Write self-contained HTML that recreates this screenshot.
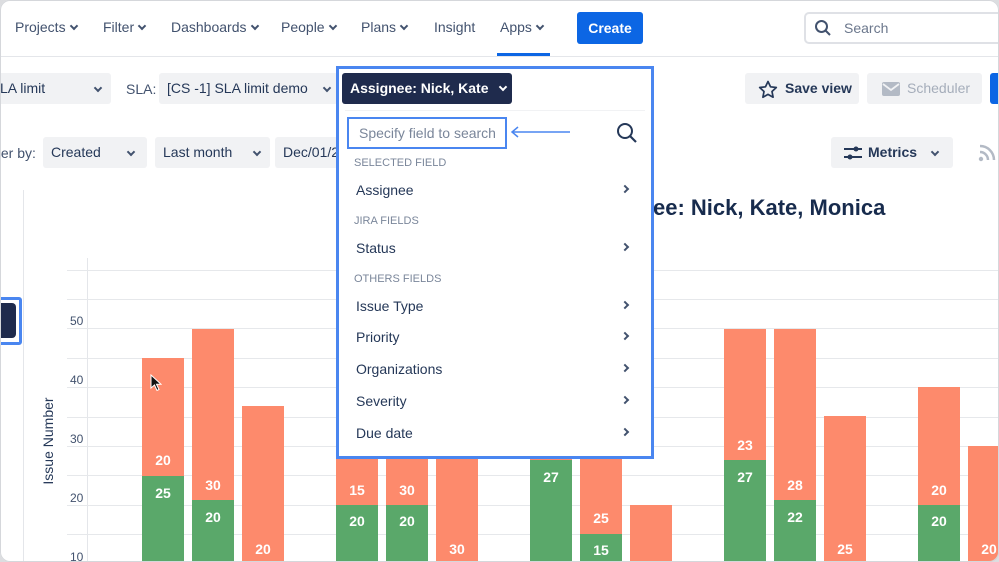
<!DOCTYPE html>
<html><head><meta charset="utf-8"><style>
*{margin:0;padding:0;box-sizing:border-box}
body{width:999px;height:562px;overflow:hidden;background:#dcdde0;font-family:"Liberation Sans",Arial,sans-serif;color:#253858}
#w{position:absolute;left:0;top:0;width:999px;height:562px;background:#fff;border-radius:10px;overflow:hidden}
#fr{position:absolute;left:0;top:0;width:999px;height:562px;border-radius:10px;border:1px solid #d5d7db;pointer-events:none}
.a{position:absolute}
.nav{font-size:14px;color:#42526e;top:19px}
.chev{display:inline-block;width:6px;height:6px;border-right:2px solid #42526e;border-bottom:2px solid #42526e;transform:rotate(45deg);margin-left:5px;position:relative;top:-3px}
.box{background:#f1f2f4;border-radius:3px;font-size:14px;color:#253858;line-height:31px;padding-left:8px}
.gl{position:absolute;left:67px;right:0;height:1px;background:#e6e8eb}
.bar{position:absolute;width:42px}
.o{background:#fd8a6c}.g{background:#5aa86a}
.lb{position:absolute;width:42px;text-align:center;color:#fff;font-size:14px;font-weight:bold}
.it{position:absolute;left:356px;font-size:14px;color:#253858}
.hd{position:absolute;left:354px;font-size:11px;color:#7a869a}
.rc{position:absolute;left:622px;width:6px;height:6px;border-right:2px solid #42526e;border-top:2px solid #42526e;transform:rotate(45deg)}
</style></head><body><div id="w">
<div class="a nav" style="left:15px">Projects<span class="chev"></span></div>
<div class="a nav" style="left:103px">Filter<span class="chev"></span></div>
<div class="a nav" style="left:171px">Dashboards<span class="chev"></span></div>
<div class="a nav" style="left:281px">People<span class="chev"></span></div>
<div class="a nav" style="left:361px">Plans<span class="chev"></span></div>
<div class="a nav" style="left:434px">Insight</div>
<div class="a nav" style="left:500px">Apps<span class="chev"></span></div>
<div class="a" style="left:497px;top:53px;width:53px;height:3px;background:#0c66e4"></div>
<div class="a" style="left:577px;top:12px;width:66px;height:32px;background:#0c66e4;border-radius:3px;color:#fff;font-size:14px;font-weight:bold;text-align:center;line-height:32px">Create</div>
<div class="a" style="left:804px;top:12px;width:200px;height:32px;border:2px solid #dfe1e6;border-radius:5px;font-size:14px;color:#6b778c;line-height:28px;padding-left:38px">Search</div>
<svg class="a" style="left:814px;top:19px" width="18" height="18" viewBox="0 0 18 18"><circle cx="7.5" cy="7.5" r="5.5" fill="none" stroke="#42526e" stroke-width="2"/><line x1="11.5" y1="11.5" x2="16" y2="16" stroke="#42526e" stroke-width="2"/></svg>
<div class="a" style="left:0;top:56px;width:999px;height:1px;background:#e4e6ea"></div>
<div class="a box" style="left:-8px;top:73px;width:119px">LA limit<span class="chev" style="position:absolute;left:98px;top:12px"></span></div>
<div class="a" style="left:126px;top:81px;font-size:14px;color:#42526e">SLA:</div>
<div class="a box" style="left:159px;top:73px;width:179px">[CS -1] SLA limit demo<span class="chev" style="position:absolute;left:160px;top:12px"></span></div>
<div class="a box" style="left:745px;top:73px;width:114px;font-weight:bold;padding-left:40px">Save view</div>
<svg class="a" style="left:758px;top:80px" width="20" height="19" viewBox="0 0 20 19"><path d="M10 1.5l2.5 5.3 5.8.7-4.3 4 1.1 5.7L10 14.4l-5.1 2.8 1.1-5.7-4.3-4 5.8-.7z" fill="none" stroke="#253858" stroke-width="1.7" stroke-linejoin="round"/></svg>
<div class="a box" style="left:867px;top:73px;width:115px;color:#a5adba;padding-left:40px">Scheduler</div>
<svg class="a" style="left:882px;top:82px" width="18" height="14" viewBox="0 0 18 14"><rect x="0" y="0" width="18" height="14" rx="2" fill="#b3bac5"/><path d="M1 2l8 6 8-6" fill="none" stroke="#f1f2f4" stroke-width="1.8"/></svg>
<div class="a" style="left:990px;top:73px;width:20px;height:31px;background:#0c66e4;border-radius:3px"></div>
<div class="a" style="left:-3px;top:145px;font-size:14px;color:#42526e">ter by:</div>
<div class="a box" style="left:43px;top:137px;width:104px">Created<span class="chev" style="position:absolute;left:80px;top:12px"></span></div>
<div class="a box" style="left:155px;top:137px;width:115px">Last month<span class="chev" style="position:absolute;left:94px;top:12px"></span></div>
<div class="a box" style="left:275px;top:137px;width:70px">Dec/01/2</div>
<div class="a box" style="left:831px;top:137px;width:122px;font-weight:bold;padding-left:37px">Metrics<span class="chev" style="position:absolute;left:96px;top:12px"></span></div>
<svg class="a" style="left:843px;top:145px" width="20" height="16" viewBox="0 0 20 16"><g stroke="#253858" stroke-width="2"><line x1="1" y1="4" x2="19" y2="4"/><line x1="1" y1="12" x2="19" y2="12"/></g><circle cx="13" cy="4" r="2.5" fill="#253858"/><circle cx="7" cy="12" r="2.5" fill="#253858"/></svg>
<div class="a box" style="left:963px;top:137px;width:50px"></div>
<svg class="a" style="left:978px;top:144px" width="18" height="18" viewBox="0 0 18 18"><circle cx="3" cy="15" r="2.2" fill="#b3bac5"/><path d="M2 8a8 8 0 0 1 8 8M2 2a14 14 0 0 1 14 14" fill="none" stroke="#b3bac5" stroke-width="2.5"/></svg>
<div class="a" style="left:23px;top:190px;width:1px;height:380px;background:#e4e6ea"></div>
<div class="a" style="left:87px;top:258px;width:1px;height:310px;background:#e4e6ea"></div>
<div class="gl" style="top:270px"></div><div class="gl" style="top:299px"></div><div class="gl" style="top:328px"></div><div class="gl" style="top:358px"></div><div class="gl" style="top:387px"></div><div class="gl" style="top:417px"></div><div class="gl" style="top:446px"></div><div class="gl" style="top:475px"></div><div class="gl" style="top:505px"></div><div class="gl" style="top:534px"></div>
<div class="a" style="left:70px;top:314px;font-size:12px;color:#42526e">50</div>
<div class="a" style="left:70px;top:373px;font-size:12px;color:#42526e">40</div>
<div class="a" style="left:70px;top:432px;font-size:12px;color:#42526e">30</div>
<div class="a" style="left:70px;top:491px;font-size:12px;color:#42526e">20</div>
<div class="a" style="left:70px;top:550px;font-size:12px;color:#42526e">10</div>
<div class="a" style="left:-2px;top:433px;width:100px;transform:rotate(-90deg);font-size:14px;color:#253858;text-align:center">Issue Number</div>
<div class="a" style="left:653px;top:195px;font-size:22px;font-weight:bold;color:#172b4d">ee: Nick, Kate, Monica</div>
<div class="a" style="left:-5px;top:297px;width:27px;height:48px;border:3px solid #4a86f0;border-radius:3px"></div>
<div class="a" style="left:-5px;top:303px;width:21px;height:35px;background:#1f2b4d;border-radius:4px"></div>

<div class="bar o" style="left:142px;top:358px;height:210px"></div><div class="bar g" style="left:142px;top:476px;height:90px"></div>
<div class="lb" style="left:142px;top:452px">20</div><div class="lb" style="left:142px;top:485px">25</div>
<div class="bar o" style="left:192px;top:329px;height:240px"></div><div class="bar g" style="left:192px;top:500px;height:70px"></div>
<div class="lb" style="left:192px;top:477px">30</div><div class="lb" style="left:192px;top:509px">20</div>
<div class="bar o" style="left:242px;top:406px;height:160px"></div><div class="lb" style="left:242px;top:541px">20</div>
<div class="bar o" style="left:336px;top:440px;height:130px"></div><div class="bar g" style="left:336px;top:505px;height:70px"></div>
<div class="lb" style="left:336px;top:482px">15</div><div class="lb" style="left:336px;top:513px">20</div>
<div class="bar o" style="left:386px;top:440px;height:130px"></div><div class="bar g" style="left:386px;top:505px;height:70px"></div>
<div class="lb" style="left:386px;top:482px">30</div><div class="lb" style="left:386px;top:513px">20</div>
<div class="bar o" style="left:436px;top:440px;height:130px"></div><div class="lb" style="left:436px;top:541px">30</div>
<div class="bar o" style="left:530px;top:440px;height:30px"></div><div class="bar g" style="left:530px;top:460px;height:110px"></div>
<div class="lb" style="left:530px;top:469px">27</div>
<div class="bar o" style="left:580px;top:440px;height:130px"></div><div class="bar g" style="left:580px;top:534px;height:40px"></div>
<div class="lb" style="left:580px;top:510px">25</div><div class="lb" style="left:580px;top:542px">15</div>
<div class="bar o" style="left:630px;top:505px;height:70px"></div>
<div class="bar o" style="left:724px;top:329px;height:240px"></div><div class="bar g" style="left:724px;top:460px;height:110px"></div>
<div class="lb" style="left:724px;top:437px">23</div><div class="lb" style="left:724px;top:469px">27</div>
<div class="bar o" style="left:774px;top:329px;height:240px"></div><div class="bar g" style="left:774px;top:500px;height:70px"></div>
<div class="lb" style="left:774px;top:477px">28</div><div class="lb" style="left:774px;top:509px">22</div>
<div class="bar o" style="left:824px;top:416px;height:160px"></div><div class="lb" style="left:824px;top:541px">25</div>
<div class="bar o" style="left:918px;top:387px;height:190px"></div><div class="bar g" style="left:918px;top:505px;height:70px"></div>
<div class="lb" style="left:918px;top:482px">20</div><div class="lb" style="left:918px;top:513px">20</div>
<div class="bar o" style="left:968px;top:446px;height:130px"></div><div class="lb" style="left:968px;top:541px">20</div>
<svg class="a" style="left:150px;top:374px" width="12" height="18" viewBox="0 0 12 18"><path d="M1 1v13l3.5-3 2.5 5.5 2-1-2.5-5.3H11z" fill="#111" stroke="#fff" stroke-width="1"/></svg>

<div class="a" style="left:336px;top:66px;width:318px;height:393px;background:#fff;border:3px solid #4a86f0"></div>
<div class="a" style="left:342px;top:73px;width:170px;height:31px;background:#1f2b4d;border-radius:3px;color:#fff;font-size:14px;font-weight:bold;line-height:31px;padding-left:8px">Assignee: Nick, Kate<span class="chev" style="position:absolute;left:153px;top:11px;border-color:#fff"></span></div>
<div class="a" style="left:345px;top:110px;width:300px;height:1px;background:#f1f2f4"></div>
<div class="a" style="left:347px;top:117px;width:160px;height:32px;border:2px solid #4a86f0;font-size:14px;color:#7a869a;line-height:28px;padding-left:10px">Specify field to search</div>
<svg class="a" style="left:510px;top:126px" width="62" height="12" viewBox="0 0 62 12"><path d="M2 6h58M8 1L2 6l6 5" fill="none" stroke="#4a86f0" stroke-width="1.5"/></svg>
<svg class="a" style="left:616px;top:122px" width="22" height="22" viewBox="0 0 22 22"><circle cx="9" cy="9" r="7" fill="none" stroke="#253858" stroke-width="2"/><line x1="14" y1="14" x2="20" y2="20" stroke="#253858" stroke-width="2.2"/></svg>
<div class="hd" style="top:157px">SELECTED FIELD</div>
<div class="it" style="top:182px">Assignee</div><div class="rc" style="top:186px"></div>
<div class="hd" style="top:215px">JIRA FIELDS</div>
<div class="it" style="top:240px">Status</div><div class="rc" style="top:244px"></div>
<div class="hd" style="top:273px">OTHERS FIELDS</div>
<div class="it" style="top:298px">Issue Type</div><div class="rc" style="top:302px"></div>
<div class="it" style="top:329px">Priority</div><div class="rc" style="top:333px"></div>
<div class="it" style="top:361px">Organizations</div><div class="rc" style="top:365px"></div>
<div class="it" style="top:393px">Severity</div><div class="rc" style="top:397px"></div>
<div class="it" style="top:425px">Due date</div><div class="rc" style="top:429px"></div>
</div><div id="fr"></div></body></html>
